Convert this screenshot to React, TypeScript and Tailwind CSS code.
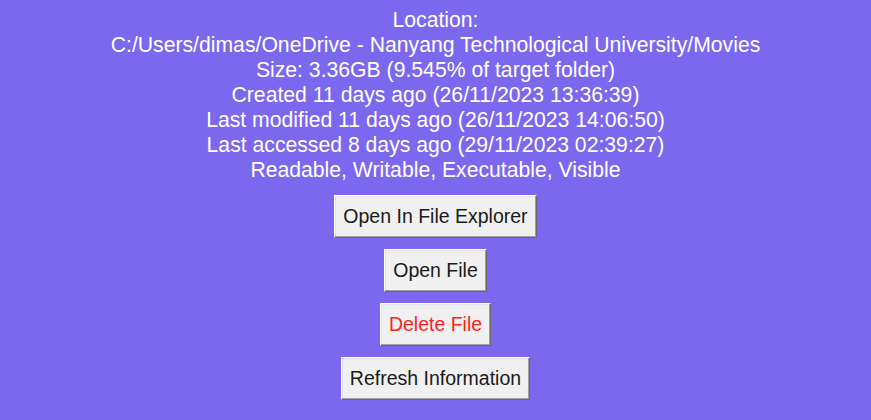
const lines = [
  "Location:",
  "C:/Users/dimas/OneDrive - Nanyang Technological University/Movies",
  "Size: 3.36GB (9.545% of target folder)",
  "Created 11 days ago (26/11/2023 13:36:39)",
  "Last modified 11 days ago (26/11/2023 14:06:50)",
  "Last accessed 8 days ago (29/11/2023 02:39:27)",
  "Readable, Writable, Executable, Visible",
];

function TkButton({ label, danger }: { label: string; danger?: boolean }) {
  return (
    <button
      className={
        "h-[43px] px-[8px] bg-[#f0f0f0] border border-t-white border-l-white border-r-[#696969] border-b-[#696969] shadow-[inset_-1px_-1px_0_#a0a0a0,inset_1px_1px_0_#e3e3e3] text-[19.5px] " +
        (danger ? "text-[#ff2020]" : "text-[#1a1a1a]")
      }
    >
      {label}
    </button>
  );
}

export default function App() {
  return (
    <div className="w-[871px] h-[420px] bg-[#7b68ee] flex flex-col items-center pt-[7px] font-['Liberation_Sans',Arial,sans-serif] overflow-hidden">
      <div className="flex flex-col items-center text-white text-[21.2px] leading-[25px] text-center">
        {lines.map((l) => (
          <p key={l}>{l}</p>
        ))}
      </div>
      <div className="mt-[13px] flex flex-col items-center gap-[11px]">
        <TkButton label="Open In File Explorer" />
        <TkButton label="Open File" />
        <TkButton label="Delete File" danger />
        <TkButton label="Refresh Information" />
      </div>
    </div>
  );
}
